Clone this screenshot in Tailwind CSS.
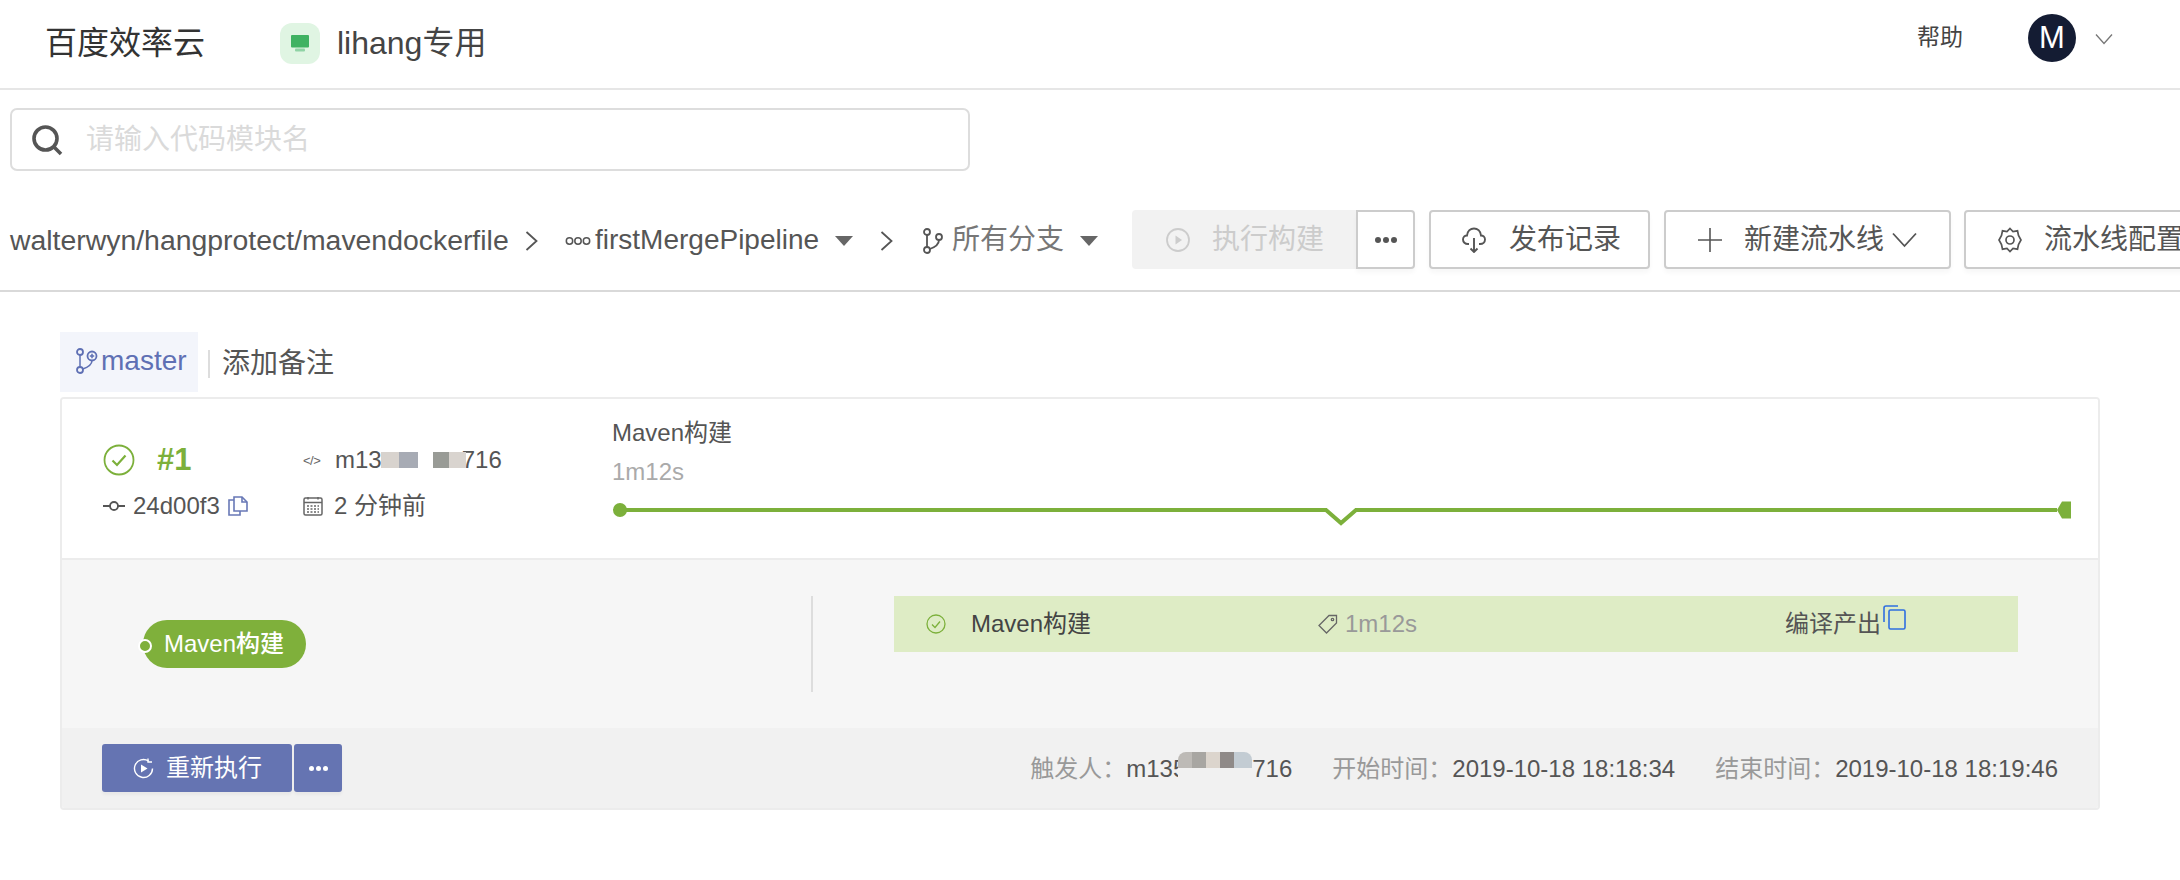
<!DOCTYPE html>
<html lang="zh">
<head>
<meta charset="utf-8">
<script src="https://cdn.jsdelivr.net/npm/@tailwindcss/browser@4"></script>
</head>
<body class="m-0 bg-white">
<div class="w-[2180px] h-[880px] overflow-hidden bg-white text-[#555] font-['Liberation_Sans','Noto_Sans_CJK_SC',sans-serif]">

  <!-- top bar -->
  <header class="h-[90px] border-b-2 border-[#e6e6e6] flex items-start shrink-0">
    <div class="ml-[45px] mt-[23px] w-[235px] h-[40px] leading-[40px] text-[32px] text-[#333] whitespace-nowrap">百度效率云</div>
    <div class="mt-[23px] w-[40px] h-[41px] rounded-[12px] bg-[#e0f5e3] flex items-center justify-center">
      <svg width="18" height="17" viewBox="0 0 18 17"><rect x="0" y="0" width="18" height="12.500" rx="1" fill="#3fb262"/><rect x="4" y="13.500" width="10" height="3" rx="1" fill="#8fd3a5"/></svg>
    </div>
    <div class="ml-[17px] mt-[23px] w-[155px] h-[40px] leading-[40px] text-[32px] text-[#444] whitespace-nowrap">lihang专用</div>
    <div class="ml-auto mt-[20px] h-[34px] leading-[34px] text-[23px] text-[#444] whitespace-nowrap">帮助</div>
    <div class="ml-[65px] mt-[14px] w-[48px] h-[48px] rounded-full bg-[#141c33] text-white text-[31px] leading-[48px] text-center">M</div>
    <svg class="ml-[19px] mr-[67px] mt-[33px]" width="18" height="12" viewBox="0 0 18 12" fill="none" stroke="#777" stroke-width="1.3"><path d="M1 1.5 9 10.5 17 1.5"/></svg>
  </header>

  <!-- search -->
  <div class="ml-[10px] mt-[18px] w-[960px] h-[63px] border-2 border-[#ddd] rounded-[7px] flex items-center">
    <svg class="ml-[19px]" width="32" height="32" viewBox="0 0 32 32" fill="none" stroke="#555" stroke-width="3.6"><circle cx="14.5" cy="14.5" r="11.5"/><path d="M23 23 30 30"/></svg>
    <span class="ml-[23px] text-[28px] leading-[40px] text-[#dadada] whitespace-nowrap">请输入代码模块名</span>
  </div>

  <!-- toolbar -->
  <div class="h-[121px] border-b-2 border-[#d9d9d9] pt-[39px] flex items-start overflow-hidden whitespace-nowrap">
    <div class="ml-[10px] w-[499px] h-[60px] leading-[60px] text-[28.4px] text-[#555] shrink-0">walterwyn/hangprotect/mavendockerfile</div>
    <svg class="ml-[16px] mt-[21px] shrink-0" width="13" height="20" viewBox="0 0 13 20" fill="none" stroke="#555" stroke-width="1.8"><path d="M1.5 1 11.5 10 1.5 19"/></svg>
    <svg class="ml-[27px] mt-[26px] shrink-0" width="26" height="10" viewBox="0 0 26 10" fill="none" stroke="#555" stroke-width="1.5"><circle cx="4.5" cy="5" r="3.2"/><circle cx="13" cy="5" r="3.2"/><circle cx="21.5" cy="5" r="3.2"/></svg>
    <div class="ml-[4px] w-[226px] h-[60px] leading-[60px] text-[28px] text-[#555] shrink-0">firstMergePipeline</div>
    <svg class="ml-[14px] mt-[26px] shrink-0" width="18" height="10" viewBox="0 0 18 10"><path d="M0 0H18L9 10Z" fill="#666"/></svg>
    <svg class="ml-[27px] mt-[21px] shrink-0" width="13" height="20" viewBox="0 0 13 20" fill="none" stroke="#555" stroke-width="1.8"><path d="M1.5 1 11.5 10 1.5 19"/></svg>
    <svg class="ml-[30px] mt-[18px] shrink-0" width="20" height="26" viewBox="0 0 20 26" fill="none" stroke="#555" stroke-width="1.8"><circle cx="4" cy="4" r="3"/><circle cx="4" cy="22" r="3"/><circle cx="16" cy="9" r="3"/><path d="M4 7V19M16 12C16 17 11 19.500 6.800 21"/></svg>
    <div class="ml-[9px] w-[112px] h-[60px] leading-[60px] text-[28px] text-[#777] shrink-0">所有分支</div>
    <svg class="ml-[16px] mt-[26px] shrink-0" width="18" height="10" viewBox="0 0 18 10"><path d="M0 0H18L9 10Z" fill="#666"/></svg>
    <div class="ml-[34px] w-[224px] h-[59px] rounded-l-[4px] bg-[#f2f2f2] flex items-center text-[#ccc] text-[28px] shrink-0">
      <svg class="ml-[34px]" width="24" height="24" viewBox="0 0 24 24" fill="none" stroke="#ccc" stroke-width="1.8"><circle cx="12" cy="12" r="11"/><path d="M9.5 7.5 16 12 9.5 16.5Z" fill="#ccc" stroke="none"/></svg>
      <span class="ml-[22px]">执行构建</span>
    </div>
    <div class="w-[59px] h-[59px] border-2 border-[#ccc] rounded-r-[4px] bg-white flex items-center justify-center gap-[2px] shadow-[0_4px_4px_rgba(0,0,0,0.03)] shrink-0">
      <i class="w-[6px] h-[6px] rounded-full bg-[#555]"></i><i class="w-[6px] h-[6px] rounded-full bg-[#555]"></i><i class="w-[6px] h-[6px] rounded-full bg-[#555]"></i>
    </div>
    <div class="ml-[14px] w-[221px] h-[59px] border-2 border-[#ccc] rounded-[4px] bg-white flex items-center text-[28px] shadow-[0_4px_4px_rgba(0,0,0,0.03)] shrink-0">
      <svg class="ml-[31px]" width="24" height="26" viewBox="0 0 24 26" fill="none" stroke="#555" stroke-width="1.900"><path d="M7 17H6C3 17 1 15 1 12.500 1 10 3 8.500 5 8.500 5.500 4 8.500 1.500 12 1.500 15.500 1.500 18.500 4 19 8.500 21 8.500 23 10 23 12.500 23 15 21 17 18 17H17"/><path d="M12 11V25M8.500 21.500 12 25 15.500 21.500"/></svg>
      <span class="ml-[23px]">发布记录</span>
    </div>
    <div class="ml-[14px] w-[287px] h-[59px] border-2 border-[#ccc] rounded-[4px] bg-white flex items-center text-[28px] shadow-[0_4px_4px_rgba(0,0,0,0.03)] shrink-0">
      <svg class="ml-[32px]" width="24" height="24" viewBox="0 0 24 24" stroke="#555" stroke-width="1.6"><path d="M12 0V24M0 12H24"/></svg>
      <span class="ml-[22px]">新建流水线</span>
      <svg class="ml-[8px]" width="25" height="16" viewBox="0 0 25 16" fill="none" stroke="#555" stroke-width="1.8"><path d="M1 1.500 12.500 14 24 1.500"/></svg>
    </div>
    <div class="ml-[13px] w-[300px] h-[59px] border-2 border-[#ccc] rounded-[4px] bg-white flex items-center text-[28px] shadow-[0_4px_4px_rgba(0,0,0,0.03)] shrink-0">
      <svg class="ml-[32px]" width="24" height="26" viewBox="0 0 24 26" fill="none" stroke="#555" stroke-width="1.7"><path d="M12 1.500 15 4.500 19.500 3.800 20.500 8.500 23 13 20.500 17.500 19.500 22.200 15 21.500 12 24.500 9 21.500 4.500 22.200 3.500 17.500 1 13 3.500 8.500 4.500 3.800 9 4.500Z"/><circle cx="12" cy="13" r="4"/></svg>
      <span class="ml-[22px]">流水线配置</span>
    </div>
  </div>

  <!-- branch tag -->
  <div class="ml-[60px] mt-[40px] h-[60px] flex items-center whitespace-nowrap">
    <div class="w-[138px] h-[60px] bg-[#f3f5fb] flex items-center text-[#5f70b4] text-[28px] pb-[2px]">
      <svg class="ml-[16px]" width="22" height="26" viewBox="0 0 22 26" fill="none" stroke="#5f70b4" stroke-width="1.800"><circle cx="4" cy="4" r="3"/><circle cx="4" cy="22" r="3"/><circle cx="16" cy="8" r="4.500"/><path d="M4 7V19M16 12.500C16 17 11 19.500 6.800 21M16 5.800V10.200M13.800 8H18.200" stroke-width="1.500"/></svg>
      <span class="ml-[3px]">master</span>
    </div>
    <i class="ml-[10px] w-[2px] h-[28px] bg-[#ddd] mt-[4px]"></i>
    <span class="ml-[12px] mt-[4px] text-[28px] text-[#555]">添加备注</span>
  </div>

  <!-- card -->
  <div class="ml-[60px] mt-[5px] w-[2040px] h-[413px] border-2 border-[#ececec] rounded-[4px] overflow-hidden flex flex-col whitespace-nowrap">
    <div class="h-[161px] border-b-2 border-[#ececec] flex items-start bg-white shrink-0">
      <div class="w-[241px] pl-[41px] pt-[41px] shrink-0">
        <div class="h-[40px] flex items-center">
          <svg width="32" height="32" viewBox="0 0 32 32" fill="none" stroke="#7cb03b" stroke-width="1.800"><circle cx="16" cy="16" r="14.500"/><path d="M9.500 16.500 14 21 22.500 11.500" stroke-width="2.200"/></svg>
          <span class="ml-[22px] text-[31px] font-bold text-[#7cb03b]">#1</span>
        </div>
        <div class="mt-[6px] h-[40px] flex items-center text-[24px]">
          <svg width="22" height="12" viewBox="0 0 22 12" fill="none" stroke="#555" stroke-width="1.800"><path d="M0 6H7M15 6H22"/><circle cx="11" cy="6" r="4"/></svg>
          <span class="ml-[8px]">24d00f3</span>
          <svg class="ml-[8px]" width="20" height="20" viewBox="0 0 20 20" fill="none" stroke="#6878b6" stroke-width="1.600"><path d="M6 4H1V19H12V15"/><path d="M6 1V15H19V6L14 1Z"/><path d="M14 1V6H19"/></svg>
        </div>
      </div>
      <div class="w-[309px] pt-[41px] shrink-0">
        <div class="h-[40px] flex items-center text-[24px]">
          <span class="w-[22px] text-[13px] text-[#666] leading-none tracking-[-0.5px]">&lt;/&gt;</span>
          <span class="ml-[10px]">m13</span>
          <span class="flex w-[85px] h-[16px] relative ml-[-1px]"><i class="w-[18px] bg-[#d8d3ce]"></i><i class="w-[19px] bg-[#a7abb4]"></i><i class="w-[15px] bg-white"></i><i class="w-[16px] bg-[#999b96]"></i><i class="w-[17px] bg-[#d9d4cf]"></i></span>
          <span class="ml-[-4px]">716</span>
        </div>
        <div class="mt-[6px] h-[40px] flex items-center text-[24px]">
          <svg width="20" height="20" viewBox="0 0 20 20" fill="none" stroke="#666" stroke-width="1.500"><rect x="1" y="2" width="18" height="17" rx="1.500"/><path d="M1 6.500H19M5 1V3.500M15 1V3.500"/><path d="M4 10H16M4 13H16M4 16H16" stroke-dasharray="2 1.500"/></svg>
          <span class="ml-[11px]">2 分钟前</span>
        </div>
      </div>
      <div class="flex-1 pt-[16px] min-w-0">
        <div class="h-[36px] leading-[36px] text-[24px] text-[#555]">Maven构建</div>
        <div class="mt-[3px] h-[36px] leading-[36px] text-[24px] text-[#aaa]">1m12s</div>
        <svg class="mt-[5px] block" width="1460" height="32" viewBox="0 0 1460 32"><path d="M8 15H714L729 28 744 15H1445" fill="none" stroke="#7cb03b" stroke-width="4"/><circle cx="8" cy="15" r="7" fill="#7cb03b"/><path d="M1445 15 1450 6.500H1459V23.500H1450Z" fill="#7cb03b"/></svg>
      </div>
    </div>

    <div class="h-[168px] bg-[#f6f6f6] flex items-start shrink-0">
      <div class="w-[749px] shrink-0 pt-[60px] pl-[81px]">
        <div class="relative w-[163px] h-[48px] rounded-full bg-[#7fb03b] text-white text-[24px] font-medium leading-[48px] pl-[21px]">
          Maven构建
          <i class="absolute left-[-5px] top-[19px] w-[14px] h-[14px] rounded-full bg-[#7fb03b] border-2 border-white"></i>
        </div>
      </div>
      <i class="mt-[36px] w-[2px] h-[96px] bg-[#ddd] shrink-0"></i>
      <div class="ml-[81px] mt-[36px] w-[1124px] h-[56px] bg-[#deecc5] flex items-center text-[24px] shrink-0">
        <div class="w-[424px] flex items-center pl-[32px]">
          <svg width="20" height="20" viewBox="0 0 20 20" fill="none" stroke="#7cb03b" stroke-width="1.300"><circle cx="10" cy="10" r="9"/><path d="M6 10.500 9 13.500 14 7.500"/></svg>
          <span class="ml-[25px] text-[#444]">Maven构建</span>
        </div>
        <div class="w-[467px] flex items-center">
          <svg width="20" height="20" viewBox="0 0 20 20" fill="none" stroke="#666" stroke-width="1.300"><path d="M11 1.500H18.500V9L8.500 19 1 11.500Z"/><circle cx="14.500" cy="5.500" r="1.200"/></svg>
          <span class="ml-[7px] text-[#999]">1m12s</span>
        </div>
        <div class="flex items-start">
          <span class="text-[#555]">编译产出</span>
          <svg class="-mt-[1px] ml-[1px]" width="25" height="25" viewBox="0 0 25 25" fill="none" stroke="#2f6fe0" stroke-width="1.600"><path d="M2 17V3C2 2 3 1 4 1H16"/><rect x="7" y="5" width="16" height="19" rx="1.500"/></svg>
        </div>
      </div>
    </div>

    <div class="flex-1 bg-[#f1f1f1] flex items-start pt-[16px] pl-[40px] pr-[40px] min-h-0">
      <div class="w-[190px] h-[48px] rounded-[3px] bg-[#6574b2] text-white text-[24px] flex items-center shadow-[0_3px_3px_rgba(0,0,0,0.04)] shrink-0">
        <svg class="ml-[31px]" width="21" height="21" viewBox="0 0 21 21" fill="none" stroke="#fff" stroke-width="1.400"><path d="M19.500 10.500A9 9 0 1 1 15.500 3"/><path d="M15 .5V4H19"/><path d="M8 6.500 14.500 10.500 8 14.500Z" fill="#fff" stroke="none"/></svg>
        <span class="ml-[12px]">重新执行</span>
      </div>
      <div class="ml-[2px] w-[48px] h-[48px] rounded-[3px] bg-[#6574b2] flex items-center justify-center gap-[2px] shadow-[0_3px_3px_rgba(0,0,0,0.04)] shrink-0">
        <i class="w-[5px] h-[5px] rounded-full bg-white"></i><i class="w-[5px] h-[5px] rounded-full bg-white"></i><i class="w-[5px] h-[5px] rounded-full bg-white"></i>
      </div>
      <div class="ml-auto h-[48px] flex items-center text-[24px] text-[#999] pt-[1px]">
        <span class="w-[96px]">触发人：</span>
        <span class="text-[#555]">m135</span>
        <span class="relative ml-[-8px] w-[74px] h-[34px] bg-[#f1f1f1]"><span class="flex w-[74px] h-[16px] rounded-t-[8px] overflow-hidden"><i class="w-[14px] bg-[#bdbab6]"></i><i class="w-[14px] bg-[#a8a6a2]"></i><i class="w-[14px] bg-[#dcd5cd]"></i><i class="w-[14px] bg-[#8f8a88]"></i><i class="w-[18px] bg-[#c3ccd3]"></i></span></span>
        <span class="text-[#555]">716</span>
        <span class="ml-[40px] w-[120px]">开始时间：</span>
        <span class="text-[#555]">2019-10-18 18:18:34</span>
        <span class="ml-[40px] w-[120px]">结束时间：</span>
        <span class="text-[#555]">2019-10-18 18:19:46</span>
      </div>
    </div>
  </div>
</div>
</body>
</html>
